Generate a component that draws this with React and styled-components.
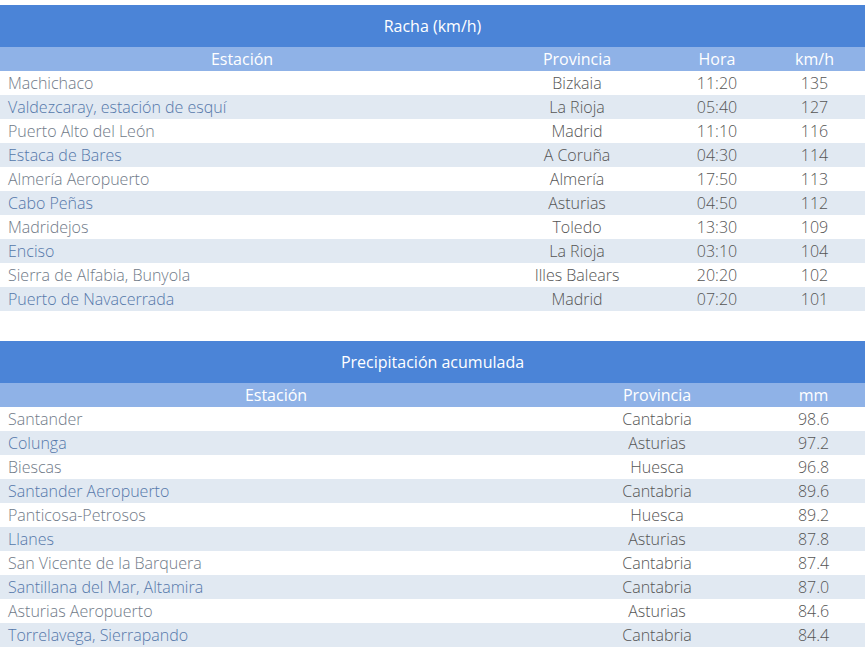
import React from "react";
import styled, { createGlobalStyle } from "styled-components";

const Global = createGlobalStyle`
  html, body { margin: 0; padding: 0; background: #fff; }
  body { font-family: "Open Sans", "Liberation Sans", sans-serif; }
`;

const Page = styled.div`
  width: 865px;
  padding-top: 5px;
  display: flex;
  flex-direction: column;
  gap: 30px;
`;

const Table = styled.section`
  display: flex;
  flex-direction: column;
`;

const Title = styled.div`
  height: 42px;
  background: #4b84d7;
  color: #fff;
  font-size: 16px;
  font-weight: 400;
  display: flex;
  align-items: center;
  justify-content: center;
`;

const Row = styled.div`
  display: grid;
  grid-template-columns: ${(p) => p.$cols};
  height: 24px;
  line-height: 22px;
  align-items: center;
  background: ${(p) => (p.$head ? "#8fb2e7" : p.$shade ? "#e1e9f2" : "#fff")};
  color: ${(p) => (p.$head ? "#fff" : "#555")};
  font-size: 16px;
  font-weight: ${(p) => (p.$head ? 400 : 300)};
`;

const Cell = styled.div`
  text-align: center;
  white-space: nowrap;
`;

const Name = styled.div`
  padding-left: 8px;
  white-space: nowrap;
  color: ${(p) => (p.$shade ? "#5578aa" : "#707a88")};
`;

const racha = [
  ["Machichaco", "Bizkaia", "11:20", "135"],
  ["Valdezcaray, estación de esquí", "La Rioja", "05:40", "127"],
  ["Puerto Alto del León", "Madrid", "11:10", "116"],
  ["Estaca de Bares", "A Coruña", "04:30", "114"],
  ["Almería Aeropuerto", "Almería", "17:50", "113"],
  ["Cabo Peñas", "Asturias", "04:50", "112"],
  ["Madridejos", "Toledo", "13:30", "109"],
  ["Enciso", "La Rioja", "03:10", "104"],
  ["Sierra de Alfabia, Bunyola", "Illes Balears", "20:20", "102"],
  ["Puerto de Navacerrada", "Madrid", "07:20", "101"],
];

const precip = [
  ["Santander", "Cantabria", "98.6"],
  ["Colunga", "Asturias", "97.2"],
  ["Biescas", "Huesca", "96.8"],
  ["Santander Aeropuerto", "Cantabria", "89.6"],
  ["Panticosa-Petrosos", "Huesca", "89.2"],
  ["Llanes", "Asturias", "87.8"],
  ["San Vicente de la Barquera", "Cantabria", "87.4"],
  ["Santillana del Mar, Altamira", "Cantabria", "87.0"],
  ["Asturias Aeropuerto", "Asturias", "84.6"],
  ["Torrelavega, Sierrapando", "Cantabria", "84.4"],
];

function DataTable({ title, cols, heads, rows }) {
  return (
    <Table>
      <Title>{title}</Title>
      <Row $head $cols={cols}>
        {heads.map((h) => (
          <Cell key={h}>{h}</Cell>
        ))}
      </Row>
      {rows.map((r, i) => {
        const shade = i % 2 === 1;
        return (
          <Row key={r[0]} $cols={cols} $shade={shade}>
            <Name $shade={shade}>{r[0]}</Name>
            {r.slice(1).map((v, j) => (
              <Cell key={j}>{v}</Cell>
            ))}
          </Row>
        );
      })}
    </Table>
  );
}

export default function App() {
  return (
    <>
      <Global />
      <Page>
        <DataTable
          title="Racha (km/h)"
          cols="484px 186px 94px 101px"
          heads={["Estación", "Provincia", "Hora", "km/h"]}
          rows={racha}
        />
        <DataTable
          title="Precipitación acumulada"
          cols="552px 210px 103px"
          heads={["Estación", "Provincia", "mm"]}
          rows={precip}
        />
      </Page>
    </>
  );
}
